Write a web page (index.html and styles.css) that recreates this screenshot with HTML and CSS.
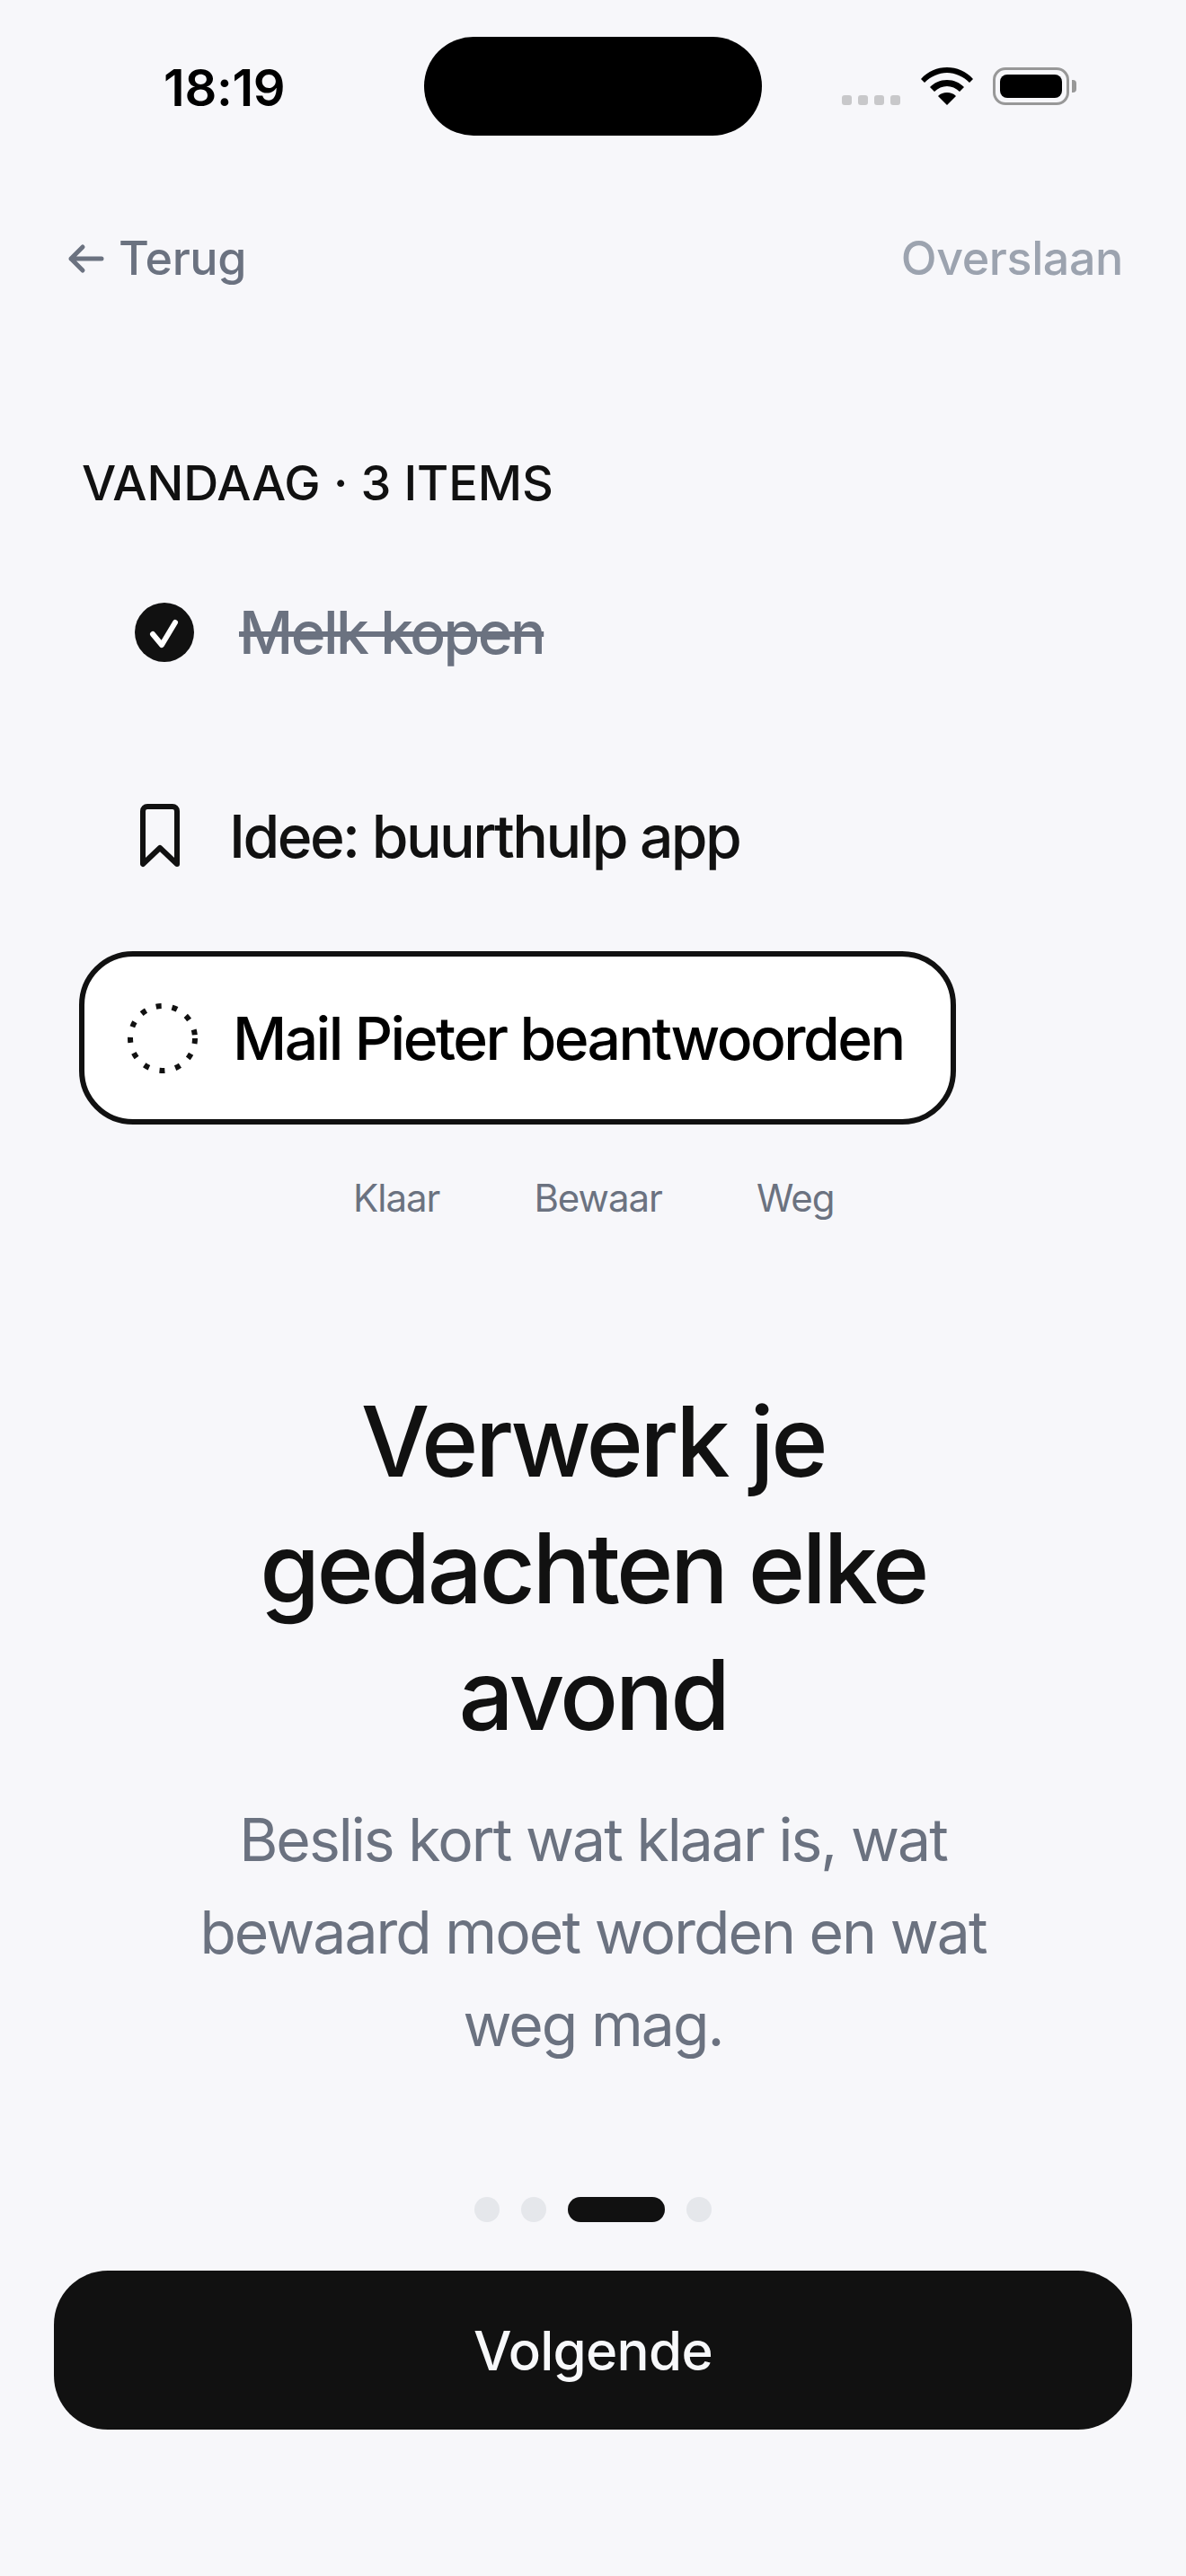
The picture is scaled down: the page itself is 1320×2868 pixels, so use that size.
FILE: index.html
```html
<!DOCTYPE html>
<html lang="nl">
<head>
  <meta charset="UTF-8">
  <meta name="viewport" content="width=device-width, initial-scale=1.0">
  <title>Verwerk je gedachten</title>
  <link rel="stylesheet" href="styles.css">
</head>
<body>
  <div class="screen">
    <div class="status-bar">
      <span class="status-time">18:19</span>
      <div class="island"></div>
      <div class="status-icons">
        <div class="signal"><i></i><i></i><i></i><i></i></div>
        <svg class="wifi" viewBox="0 0 58 42">
          <path d="M29 0C18 0 8 4 0 13l4 4C11 10 20 6 29 6s18 4 25 11l4-4C50 4 40 0 29 0z"/>
          <path d="M29 14c-8 0-14 3-19 8l5 5c4-4 9-6 14-6s10 2 14 6l5-5c-5-5-11-8-19-8z"/>
          <path d="M29 28c-4 0-7 1-10 4l10 10 10-10c-3-3-6-4-10-4z"/>
        </svg>
        <div class="battery"><div class="battery-body"><div class="battery-fill"></div></div><div class="battery-cap"></div></div>
      </div>
    </div>

    <div class="nav">
      <a class="back">
        <svg class="back-arrow" viewBox="0 0 44 36"><path d="M18 5L5 18l13 13M5 18h34"/></svg>
        Terug
      </a>
      <a class="skip">Overslaan</a>
    </div>

    <div class="list-title">VANDAAG · 3 ITEMS</div>

    <div class="item item-done">
      <svg class="icon-check" viewBox="0 0 66 66">
        <circle cx="33" cy="33" r="33"/>
        <path d="M20 35l10 12 15-25"/>
      </svg>
      <span class="item-text">Melk kopen</span>
    </div>

    <div class="item item-saved">
      <svg class="icon-bookmark" viewBox="0 0 44 72"><path d="M3 8a5 5 0 0 1 5-5h28a5 5 0 0 1 5 5v59L22 49 3 67z"/></svg>
      <span class="item-text">Idee: buurthulp app</span>
    </div>

    <div class="card">
      <svg class="icon-dotted" viewBox="0 0 78 78"><circle cx="39" cy="39" r="36"/></svg>
      <span class="card-text">Mail Pieter beantwoorden</span>
    </div>

    <div class="actions">
      <span>Klaar</span>
      <span>Bewaar</span>
      <span>Weg</span>
    </div>

    <div class="copy">
      <h1>Verwerk je gedachten elke avond</h1>
      <p>Beslis kort wat klaar is, wat bewaard moet worden en wat weg mag.</p>
    </div>

    <div class="dots">
      <i></i><i></i><i class="active"></i><i></i>
    </div>

    <button class="next-btn">Volgende</button>
  </div>
</body>
</html>
```

FILE: styles.css
```css
* {
  box-sizing: border-box;
}

body {
  margin: 0;
  background-color: #f7f7fa;
  font-family: Inter, 'Noto Sans', sans-serif;
  color: #111;
}

.screen {
  width: 1320px;
  height: 2868px;
  overflow: hidden;
  display: flex;
  flex-direction: column;
}

/* Status bar */
.status-bar {
  display: grid;
  grid-template-columns: 1fr 376px 1fr;
  align-items: center;
  height: 110px;
  margin-top: 41px;
}

.status-time {
  padding: 4px 0 0 182px;
  font-size: 56px;
  font-weight: 600;
  color: #000;
  letter-spacing: -0.3px;
}

.island {
  height: 110px;
  border-radius: 55px;
  background-color: #000;
}

.status-icons {
  display: flex;
  align-items: flex-end;
  padding-left: 89px;
}

.signal {
  display: flex;
  gap: 7px;
  margin-right: 23px;
}

.signal i {
  width: 11px;
  height: 11px;
  border-radius: 3px;
  background-color: #c8c8ca;
}

.wifi {
  width: 58px;
  height: 42px;
  margin-right: 22px;
}

.wifi path {
  fill: #000;
}

.battery {
  display: flex;
  align-items: center;
}

.battery-body {
  width: 85px;
  height: 42px;
  padding: 5px;
  border: 3px solid #989898;
  border-radius: 14px;
}

.battery-fill {
  height: 100%;
  border-radius: 8px;
  background-color: #000;
}

.battery-cap {
  width: 5px;
  height: 14px;
  margin-left: 3px;
  border-radius: 0 4px 4px 0;
  background-color: #989898;
}

/* Nav */
.nav {
  display: flex;
  justify-content: space-between;
  align-items: center;
  margin-top: 100px;
  padding: 0 70px 0 74px;
  font-size: 52px;
  line-height: 74px;
  font-weight: 500;
  letter-spacing: -0.4px;
}

.back {
  display: flex;
  align-items: center;
  gap: 14px;
  color: #6b7280;
}

.back-arrow {
  width: 44px;
  height: 36px;
}

.back-arrow path {
  fill: none;
  stroke: #6b7280;
  stroke-width: 5;
  stroke-linecap: round;
  stroke-linejoin: round;
}

.skip {
  color: #9ca3af;
}

/* List */
.list-title {
  margin-top: 178px;
  padding-left: 91px;
  font-size: 54px;
  line-height: 70px;
  font-weight: 500;
  letter-spacing: -0.1px;
  color: #111;
}

.item {
  display: flex;
  align-items: center;
  font-size: 66px;
  font-weight: 500;
  letter-spacing: -2.55px;
}

.item-done {
  height: 66px;
  margin-top: 98px;
  padding-left: 150px;
}

.item-done .item-text {
  margin-left: 50px;
  color: #6b7280;
  text-decoration: line-through;
}

.icon-check {
  width: 66px;
  height: 66px;
}

.icon-check circle {
  fill: #111;
}

.icon-check path {
  fill: none;
  stroke: #fff;
  stroke-width: 6;
  stroke-linecap: round;
  stroke-linejoin: round;
}

.item-saved {
  height: 72px;
  margin-top: 158px;
  padding-left: 156px;
}

.item-saved .item-text {
  margin-left: 55px;
}

.icon-bookmark {
  width: 44px;
  height: 72px;
}

.icon-bookmark path {
  fill: none;
  stroke: #111;
  stroke-width: 6;
  stroke-linejoin: round;
}

.card {
  display: flex;
  align-items: center;
  width: 976px;
  height: 193px;
  margin: 92px 0 0 88px;
  padding-left: 48px;
  background-color: #fff;
  border: 6px solid #111;
  border-radius: 60px;
}

.icon-dotted {
  width: 78px;
  height: 78px;
  flex-shrink: 0;
}

.icon-dotted circle {
  fill: none;
  stroke: #111;
  stroke-width: 6;
  stroke-dasharray: 6 12;
}

.card-text {
  margin-left: 39px;
  font-size: 66px;
  font-weight: 500;
  letter-spacing: -2.55px;
  color: #000;
}

.actions {
  display: flex;
  margin-top: 54px;
  padding-left: 393px;
  gap: 105px;
  font-size: 42px;
  line-height: 56px;
  letter-spacing: -1px;
  color: #6b7280;
}

/* Copy */
.copy {
  text-align: center;
  margin-top: 172px;
}

h1 {
  width: 900px;
  margin: 0 auto;
  font-size: 108px;
  line-height: 141px;
  font-weight: 500;
  letter-spacing: -3.5px;
  color: #111;
}

.copy p {
  width: 900px;
  margin: 40px auto 0;
  font-size: 66px;
  line-height: 103px;
  letter-spacing: -1.95px;
  color: #6b7280;
}

/* Pager */
.dots {
  display: flex;
  justify-content: center;
  gap: 24px;
  margin-top: 140px;
}

.dots i {
  width: 28px;
  height: 28px;
  border-radius: 14px;
  background-color: #e5e7eb;
}

.dots .active {
  width: 108px;
  background-color: #111;
}

.next-btn {
  width: 1200px;
  height: 177px;
  margin: 54px 0 0 60px;
  border: none;
  border-radius: 60px;
  background-color: #111;
  color: #f7f8fa;
  font-family: inherit;
  font-size: 60px;
  font-weight: 500;
  letter-spacing: -0.7px;
}
```
